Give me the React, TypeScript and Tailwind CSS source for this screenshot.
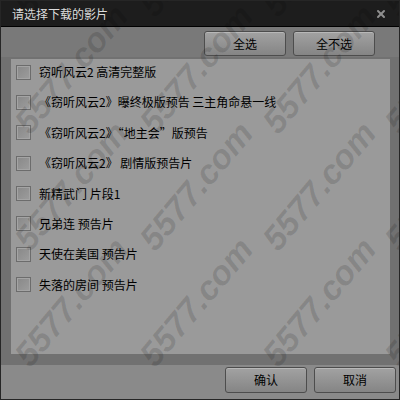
import { X } from "lucide-react";

const movies = [
  "窃听风云2 高清完整版",
  "《窃听风云2》曝终极版预告 三主角命悬一线",
  "《窃听风云2》“地主会”版预告",
  "《窃听风云2》 剧情版预告片",
  "新精武门 片段1",
  "兄弟连 预告片",
  "天使在美国 预告片",
  "失落的房间 预告片",
];

// watermark: lower-left of each "5577.com" stamp
const cols = [20, 145, 268, 390];
const rows = [18, 135, 252, 368];

function DlgButton({ label, tall }: { label: string; tall?: boolean }) {
  return (
    <button
      className={`w-[82px] ${tall ? "h-[26px]" : "h-[25px]"} rounded-[3px] border border-[#4d4d4d] bg-gradient-to-b from-[#a2a2a2] to-[#858585] shadow-[inset_0_1px_0_#b8b8b8] text-[12px] text-black flex items-center justify-center`}
    >
      {label}
    </button>
  );
}

export default function App() {
  return (
    <div className="relative w-[400px] h-[400px] overflow-hidden border border-[#262626] flex flex-col bg-[#797979] font-['Noto_Sans_CJK_SC',sans-serif]">
      {/* title bar */}
      <div className="h-[26px] shrink-0 bg-[#1d1d1d] border-b border-black flex items-center justify-between pl-[11px] pr-[12px]">
        <span className="text-[12px] text-[#dcdcdc] leading-none">请选择下载的影片</span>
        <X size={12} strokeWidth={4} color="#8e8e8e" />
      </div>

      {/* toolbar */}
      <div className="h-[30px] shrink-0 flex justify-end gap-[7px] pt-[4px] pr-[24px]">
        <DlgButton label="全选" />
        <DlgButton label="全不选" />
      </div>

      {/* list */}
      <div className="h-[308px] shrink-0 bg-[#717171] pl-[10px] pr-[9px] pt-[2px] pb-[11px]">
        <div className="h-full bg-[#9a9a9a] flex flex-col gap-[10.4px] pt-[3px] pl-[5px]">
          {movies.map((m) => (
            <label key={m} className="h-[20px] flex items-center gap-[8px]">
              <span className="w-[15px] h-[15px] shrink-0 border border-[#6c6c6c] bg-gradient-to-br from-[#888888] to-[#9d9d9d] shadow-[inset_0_0_0_1px_#a4a4a4]" />
              <span className="text-[12px] leading-none text-black whitespace-nowrap">{m}</span>
            </label>
          ))}
        </div>
      </div>

      {/* footer */}
      <div className="flex-1 bg-[#8a8a8a] flex justify-end gap-[7px] pt-[2px] pr-[3px]">
        <DlgButton label="确认" tall />
        <DlgButton label="取消" tall />
      </div>

      {/* watermark */}
      <div className="absolute inset-0 pointer-events-none">
        {rows.map((y) =>
          cols.map((x) => (
            <span
              key={`${x}-${y}`}
              className="absolute h-[40px] leading-[40px] -rotate-[50deg] origin-left text-[34px] font-bold italic text-black/[0.13] font-['Liberation_Sans',sans-serif] whitespace-nowrap"
              style={{ left: x, top: y - 28 }}
            >
              5577.com
            </span>
          ))
        )}
      </div>
    </div>
  );
}
